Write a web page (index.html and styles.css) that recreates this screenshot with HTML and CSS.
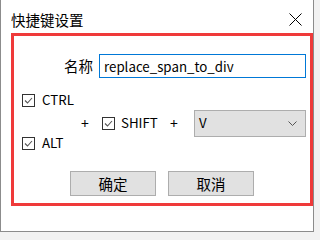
FILE: index.html
```html
<!DOCTYPE html>
<html lang="zh-CN">
<head>
<meta charset="utf-8">
<title>快捷键设置</title>
<link rel="stylesheet" href="styles.css">
</head>
<body>
<div class="window">
  <div class="titlebar">
    <span class="title">快捷键设置</span>
    <svg class="close" width="13" height="13" viewBox="0 0 13 13"><path d="M0.5 0.5 L12.5 12.5 M12.5 0.5 L0.5 12.5" stroke="#000" stroke-width="1" fill="none"/></svg>
  </div>
  <div class="panel">
    <div class="name-row">
      <label class="name-label" for="name">名称</label>
      <input id="name" class="name-input" type="text" value="replace_span_to_div">
    </div>
    <div class="keys">
      <div class="mod-col">
        <div class="check"><svg class="box" width="13" height="13" viewBox="0 0 13 13"><rect x="0.5" y="0.5" width="12" height="12" fill="#fff" stroke="#333"/><polyline points="3,6.5 5.5,9 10,4" fill="none" stroke="#555" stroke-width="1.1"/></svg><span>CTRL</span></div>
        <div class="check"><svg class="box" width="13" height="13" viewBox="0 0 13 13"><rect x="0.5" y="0.5" width="12" height="12" fill="#fff" stroke="#333"/><polyline points="3,6.5 5.5,9 10,4" fill="none" stroke="#555" stroke-width="1.1"/></svg><span>ALT</span></div>
      </div>
      <span class="plus">+</span>
      <div class="check shift"><svg class="box" width="13" height="13" viewBox="0 0 13 13"><rect x="0.5" y="0.5" width="12" height="12" fill="#fff" stroke="#333"/><polyline points="3,6.5 5.5,9 10,4" fill="none" stroke="#555" stroke-width="1.1"/></svg><span>SHIFT</span></div>
      <span class="plus plus2">+</span>
      <div class="select">
        <span class="select-value">V</span>
        <svg class="chevron" width="9" height="5" viewBox="0 0 9 5"><polyline points="0.5,0.5 4.5,4.5 8.5,0.5" fill="none" stroke="#555" stroke-width="1"/></svg>
      </div>
    </div>
    <div class="buttons">
      <button class="btn" type="button">确定</button>
      <button class="btn" type="button">取消</button>
    </div>
  </div>
</div>
</body>
</html>
```
FILE: styles.css
```css
html, body {
  margin: 0;
  padding: 0;
}
body {
  background: #f2f2f2;
  width: 317px;
  height: 233px;
  overflow: hidden;
  font-family: "Noto Sans CJK SC", "Noto Sans", sans-serif;
  color: #000;
}
.window {
  width: 312px;
  height: 231px;
  background: #fff;
  border-left: 1px solid #8c8c8c;
  border-right: 1px solid #8c8c8c;
  border-bottom: 1px solid #8c8c8c;
  display: flex;
  flex-direction: column;
}
.titlebar {
  height: 33px;
  display: flex;
  align-items: center;
  padding-left: 10px;
  position: relative;
}
.title {
  font-size: 14.5px;
  line-height: 20px;
  margin-top: 6px;
}
.close {
  position: absolute;
  left: 288px;
  top: 13px;
}
.panel {
  margin-left: 10px;
  width: 296px;
  border: 3px solid #ef3a3a;
  padding-bottom: 7px;
  display: flex;
  flex-direction: column;
}
.name-row {
  margin-top: 18px;
  padding-left: 50px;
  display: flex;
  align-items: center;
}
.name-label {
  width: 29px;
  margin-right: 6px;
  font-size: 14.5px;
  line-height: 20px;
  white-space: nowrap;
}
.name-input {
  box-sizing: border-box;
  width: 207px;
  height: 24px;
  margin: 0;
  border: 1px solid #0078d7;
  padding: 0 4px;
  font-family: "Noto Sans CJK SC", "Noto Sans", sans-serif;
  font-size: 13.3px;
  color: #000;
  outline: none;
  background: #fff;
}
.keys {
  margin-top: 12px;
  padding-left: 8px;
  display: flex;
  align-items: center;
}
.mod-col {
  width: 59px;
  display: flex;
  flex-direction: column;
  gap: 23px;
}
.check {
  height: 20px;
  display: flex;
  align-items: center;
  font-size: 13.3px;
  line-height: 20px;
  white-space: nowrap;
}
.check .box {
  flex: none;
  margin-right: 7px;
}
.plus {
  width: 7px;
  font-size: 14px;
  line-height: 20px;
  text-align: center;
  margin-top: 3px;
}
.shift {
  margin-left: 14px;
  width: 68px;
  margin-top: 3px;
}
.shift .box {
  margin-right: 6px;
}
.plus2 {
  margin-left: 0;
}
.select {
  box-sizing: border-box;
  margin-left: 17px;
  margin-top: 3px;
  width: 112px;
  height: 27px;
  border: 1px solid #adadad;
  background: #e1e1e1;
  display: flex;
  align-items: center;
  justify-content: space-between;
  padding: 0 8px 0 4px;
}
.select-value {
  font-size: 13.3px;
  line-height: 20px;
}
.buttons {
  margin-top: 18px;
  padding-left: 56px;
  display: flex;
  gap: 12px;
}
.btn {
  box-sizing: border-box;
  width: 86px;
  height: 25px;
  margin: 0;
  padding: 0;
  border: 1px solid #adadad;
  background: #e1e1e1;
  font-family: "Noto Sans CJK SC", "Noto Sans", sans-serif;
  font-size: 14.5px;
  line-height: 20px;
  color: #000;
}
```
